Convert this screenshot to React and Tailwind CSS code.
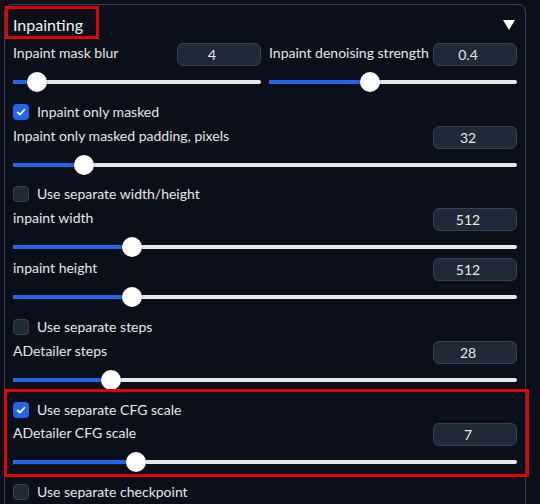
function NumberBox({ value }) {
  return (
    <div className="flex h-[23px] w-[84px] shrink-0 items-center justify-center rounded-md border border-[#374151] bg-[#1f2937] pr-[14px] text-[14px] text-[#e5e7eb]">
      {value}
    </div>
  )
}

function Slider({ frac }) {
  return (
    <div className="relative mt-[5px] h-[22px]">
      <div className="absolute left-0 right-0 top-[9px] h-[4px] rounded-full bg-[#e5e7eb]" />
      <div
        className="absolute left-0 top-[9px] h-[4px] rounded-full bg-[#2563eb]"
        style={{ width: `calc((100% - 20px) * ${frac} + 10px)` }}
      />
      <div
        className="absolute top-[1px] h-[20px] w-[20px] rounded-full bg-white shadow-[0_0_2px_rgba(0,0,0,0.4)]"
        style={{ left: `calc((100% - 20px) * ${frac})` }}
      />
    </div>
  )
}

function SliderField({ label, value, frac }) {
  return (
    <div>
      <div className="flex h-[23px] items-center justify-between">
        <span className="pb-[4px]">{label}</span>
        <NumberBox value={value} />
      </div>
      <Slider frac={frac} />
    </div>
  )
}

function Check({ label, checked, className }) {
  return (
    <label className={`flex h-[16px] items-center gap-2 ${className}`}>
      {checked ? (
        <span className="flex h-4 w-4 items-center justify-center rounded-[4px] bg-[#2563eb]">
          <svg viewBox="0 0 16 16" className="h-3 w-3" fill="none" stroke="white" strokeWidth="2.4" strokeLinecap="round" strokeLinejoin="round">
            <path d="M3.5 8.5l3 3 6-6.5" />
          </svg>
        </span>
      ) : (
        <span className="h-4 w-4 rounded-[4px] border border-[#374151] bg-[#1f2937]" />
      )}
      <span className="pb-[1px]">{label}</span>
    </label>
  )
}

export default function App() {
  return (
    <div className="relative h-[504px] w-[540px] overflow-hidden bg-[#0b0f19] font-['Lato',sans-serif] text-[14px] text-[#e5e7eb]">
      <div className="ml-[4px] mt-[4px] h-[520px] w-[522px] rounded-lg border border-[#374151] px-[8px]">
        <div className="flex h-[38px] items-center justify-between">
          <span className="mt-[2px] text-[16px] text-[#f3f4f6]">Inpainting</span>
          <svg viewBox="0 0 12 10" className="mr-[2px] mt-[2px] h-[10px] w-[12px]">
            <path d="M0 0h12L6 10z" fill="white" />
          </svg>
        </div>

        <div className="grid grid-cols-2 gap-2">
          <SliderField label="Inpaint mask blur" value="4" frac={4 / 64} />
          <SliderField label="Inpaint denoising strength" value="0.4" frac={0.4} />
        </div>

        <Check label="Inpaint only masked" checked className="mt-[11px]" />
        <div className="mt-[6px]">
          <SliderField label="Inpaint only masked padding, pixels" value="32" frac={32 / 256} />
        </div>

        <Check label="Use separate width/height" className="mt-[10px]" />
        <div className="mt-[6px]">
          <SliderField label="inpaint width" value="512" frac={448 / 1984} />
          <SliderField label="inpaint height" value="512" frac={448 / 1984} />
        </div>

        <Check label="Use separate steps" className="mt-[11px]" />
        <div className="mt-[6px]">
          <SliderField label="ADetailer steps" value="28" frac={27 / 149} />
        </div>

        <Check label="Use separate CFG scale" checked className="mt-[11px]" />
        <div className="mt-[5px]">
          <SliderField label="ADetailer CFG scale" value="7" frac={7 / 30} />
        </div>

        <Check label="Use separate checkpoint" className="mt-[11px]" />
      </div>

      <div className="pointer-events-none absolute left-[4px] top-[389px] h-[88px] w-[525px] border-[3px] border-[#e00000]" />
      <div className="pointer-events-none absolute left-[5px] top-[6px] h-[33px] w-[94px] border-[3px] border-[#e00000]" />
    </div>
  )
}
